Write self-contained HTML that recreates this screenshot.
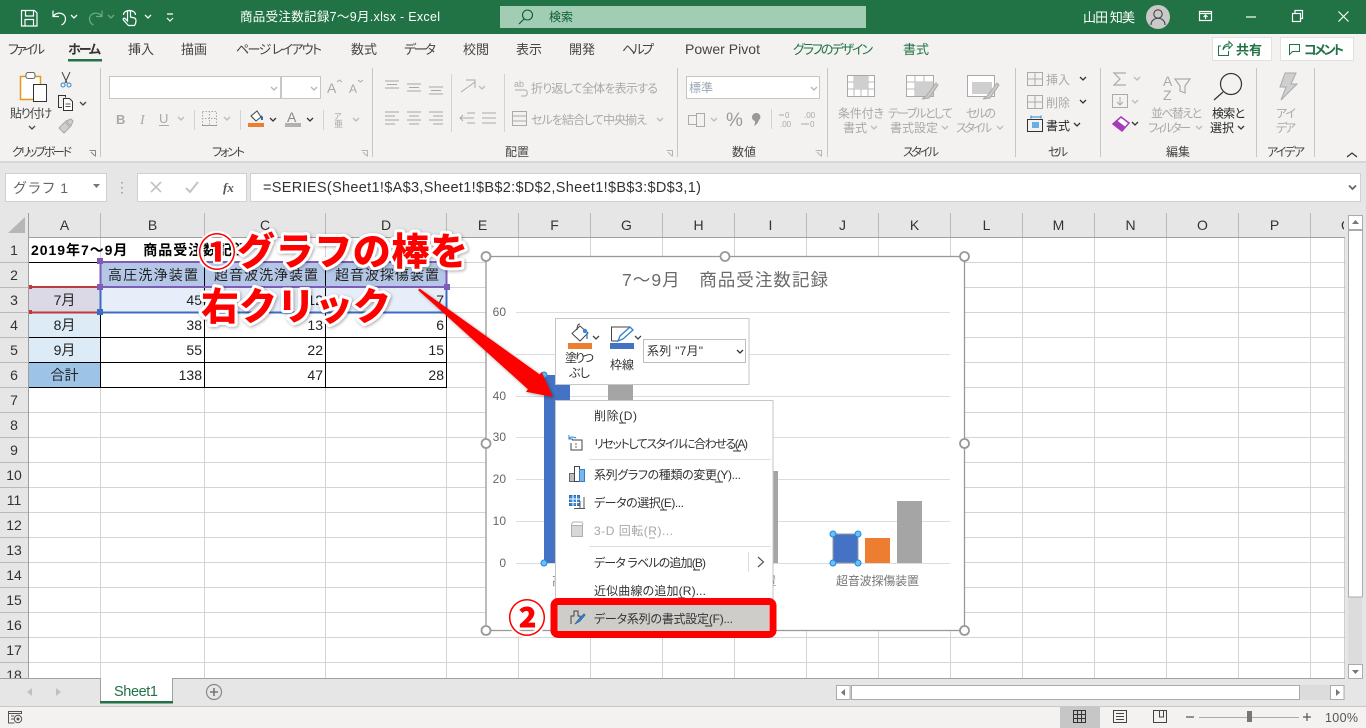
<!DOCTYPE html>
<html lang="ja"><head><meta charset="utf-8"><title>商品受注数記録7〜9月.xlsx - Excel</title>
<style>
html,body{margin:0;padding:0;background:#e6e6e6;overflow:hidden}
svg{display:block;position:absolute;left:0;top:0}
text{font-family:"Liberation Sans","Noto Sans CJK JP",sans-serif;font-size:12px;fill:#444;font-feature-settings:"palt"}
.w{fill:#fff}.d{fill:#a9a9a9}.k{fill:#262626}.g{fill:#217346}
.t{font-size:13px;fill:#444}
.c{font-size:14px;fill:#222}
.h{font-size:14px;fill:#333;text-anchor:middle}
.e{text-anchor:end}
.m{font-size:12px;fill:#333}
.ax{font-size:12px;fill:#666}
.an{font-weight:900;font-size:38px;fill:#f00;stroke:#fff;stroke-width:6px;paint-order:stroke;stroke-linejoin:round;filter:url(#sh);font-feature-settings:normal}
.cr{font-weight:900;font-size:38px;fill:#f00;stroke:#fff;stroke-width:4px;paint-order:stroke;stroke-linejoin:round;font-feature-settings:normal}
</style></head><body>
<svg width="1366" height="728" viewBox="0 0 1366 728" xmlns="http://www.w3.org/2000/svg">
<defs>
<filter id="sh" x="-10%" y="-30%" width="120%" height="160%"><feDropShadow dx="1" dy="1" stdDeviation="1.600" flood-color="#000" flood-opacity=".35"/></filter>
<path id="cv" d="M0 0l3 3 3-3" fill="none" stroke-width="1.300"/>
</defs>

<!-- base -->
<rect width="1366" height="728" fill="#e6e6e6"/>

<!-- title bar -->
<rect width="1366" height="34" fill="#217346"/>
<g fill="none" stroke="#fff" stroke-width="1.200">
<path d="M21.500 10.500h13l2.500 2.500v13h-15.500z"/><path d="M25.500 10.500v5.500h8v-5.500M25 26v-6.500h8.500v6.500"/>
<path d="M53 10.500v6h6M53.500 16c4-5 12-3 12 3 0 3-2 5-4 6"/>
<path d="M123.500 15c0-6 12-6 12 0M127 24l-3.500-4c-1-2 1-2.500 2-1l2 2v-9c0-2 3-2 3 0v5l4 1c1.500.5 1.500 2 1.500 3 0 2-.5 3-1.500 4.500h-6z"/>
</g>
<g fill="none" stroke="#6fa98a" stroke-width="1.200"><path d="M102 10.500v6h-6M101.500 16c-4-5-12-3-12 3 0 3 2 5 4 6"/></g>
<use href="#cv" x="71" y="15" stroke="#fff"/><use href="#cv" x="108" y="15" stroke="#6fa98a"/><use href="#cv" x="145" y="15" stroke="#fff"/>
<path d="M167 14h6M167 18l3 3 3-3" fill="none" stroke="#fff" stroke-width="1.200"/>
<text class="w" x="240" y="21" textLength="200" style="font-size:12.500px">商品受注数記録7〜9月.xlsx  -  Excel</text>
<rect x="500" y="6" width="366" height="22" fill="#a0cdb3"/>
<circle cx="527.500" cy="15" r="5" fill="none" stroke="#0f5c34" stroke-width="1.100"/><path d="M524 19l-5 5" stroke="#0f5c34" stroke-width="1.200"/>
<text x="549" y="21" textLength="24" style="fill:#0f5c34">検索</text>
<text class="w" x="1083" y="22" textLength="52" style="font-size:13px">山田 知美</text>
<circle cx="1158" cy="17" r="12" fill="#c9c9c9"/>
<circle cx="1158" cy="14" r="4.200" fill="none" stroke="#444" stroke-width="1.100"/><path d="M1151 25c0-9 14-9 14 0" fill="none" stroke="#444" stroke-width="1.100"/>
<g fill="none" stroke="#fff" stroke-width="1.200">
<rect x="1199.500" y="11.500" width="12" height="9"/><path d="M1199 13.500h13M1205.500 19v-4M1203.500 17l2-2 2 2"/>
<path d="M1246 17h10"/>
<rect x="1292.500" y="13.500" width="8" height="8"/><path d="M1295 13v-2.500h7.500v8H1300"/>
<path d="M1338.500 11.500l10 10M1348.500 11.500l-10 10"/>
</g>

<!-- ribbon -->
<rect y="34" width="1366" height="127" fill="#f3f2f1"/>
<rect y="161" width="1366" height="2" fill="#d6d6d6"/>
<text class="t" x="8" y="54" textLength="37">ファイル</text>
<text class="t" x="68" y="54" textLength="33" style="font-weight:700;fill:#333">ホーム</text>
<rect x="68" y="59" width="34" height="2.500" fill="#217346"/>
<text class="t" x="128" y="54" textLength="26">挿入</text>
<text class="t" x="181" y="54" textLength="26">描画</text>
<text class="t" x="236" y="54" textLength="86">ページ レイアウト</text>
<text class="t" x="351" y="54" textLength="26">数式</text>
<text class="t" x="404" y="54" textLength="32">データ</text>
<text class="t" x="463" y="54" textLength="26">校閲</text>
<text class="t" x="516" y="54" textLength="26">表示</text>
<text class="t" x="569" y="54" textLength="26">開発</text>
<text class="t" x="622" y="54" textLength="32">ヘルプ</text>
<text class="t" x="685" y="54" textLength="75" style="font-size:14px">Power Pivot</text>
<text class="t" x="793" y="54" textLength="80" style="fill:#217346">グラフのデザイン</text>
<text class="t" x="903" y="54" textLength="26" style="fill:#217346">書式</text>
<rect x="1212.500" y="37.500" width="59" height="23" fill="#fff" stroke="#e1e1e1"/>
<path d="M1221 46h-2.500v9.500h10V51M1223 50c0-4 3-6 6-6v-2.500l3.500 3.500-3.500 3.500V46c-3 0-5 1-6 4z" fill="none" stroke="#217346" stroke-width="1"/>
<text x="1236" y="54.500" textLength="26" style="font-size:13px;font-weight:700;fill:#217346">共有</text>
<rect x="1280.500" y="37.500" width="73" height="23" fill="#fff" stroke="#e1e1e1"/>
<path d="M1289.500 44.500h10v7h-7l-3 3z" fill="none" stroke="#217346" stroke-width="1"/>
<text x="1304" y="54.500" textLength="40" style="font-size:13px;font-weight:700;fill:#217346">コメント</text>

<path d="M100.500 68v89M372.500 68v89M677.500 68v89M827.500 68v89M1015.500 68v89M1100.500 68v89M1256.500 68v89M1314.500 68v89" stroke="#c6c6c6"/>
<path d="M504.500 74v58M451.500 74v58" stroke="#d2d2d2"/>

<!-- clipboard -->
<rect x="20.500" y="76.500" width="20" height="23" fill="#fff" stroke="#e8961c" stroke-width="1.500"/>
<rect x="26" y="72.500" width="9" height="6" rx="2" fill="#fff" stroke="#666"/>
<rect x="33.500" y="84.500" width="13" height="17" fill="#fff" stroke="#333"/>
<text x="10" y="117.500" textLength="42">貼り付け</text>
<use href="#cv" x="29" y="126" stroke="#444"/>
<path d="M62 72l5 11M70 72l-5 11" stroke="#444" fill="none"/><circle cx="63" cy="85" r="2" fill="none" stroke="#2e8bd0"/><circle cx="69" cy="85" r="2" fill="none" stroke="#2e8bd0"/>
<path d="M62 107.500h-3.500v-12h7v2" fill="none" stroke="#333"/><path d="M63.500 98.500h6l3 3v9h-9z" fill="#fff" stroke="#333"/><path d="M65.500 104h5M65.500 106.500h5" stroke="#555"/>
<use href="#cv" x="80" y="102" stroke="#444"/>
<path d="M59 128l6-6 5 5-6 6zM66 121l5-2 2 2-2 5z" fill="#cfcfcf" stroke="#a8a8a8"/>
<text x="12" y="156" textLength="60">クリップボード</text>
<path d="M89.500 150.500h6v6M91 152l4 4" fill="none" stroke="#888"/>

<!-- font -->
<rect x="109.500" y="76.500" width="171" height="22" fill="#fff" stroke="#c6c6c6"/>
<rect x="281.500" y="76.500" width="39" height="22" fill="#fff" stroke="#c6c6c6"/>
<use href="#cv" x="271" y="87" stroke="#b5b5b5"/><use href="#cv" x="311" y="87" stroke="#b5b5b5"/>
<text class="d" x="327" y="93" style="font-size:14px">A</text><path d="M337 82l2.500-2 2.500 2" fill="none" stroke="#aaa"/>
<text class="d" x="349" y="93" style="font-size:12px">A</text><path d="M358 80l2.500 2 2.500-2" fill="none" stroke="#aaa"/>
<text class="d" x="116" y="124" style="font-weight:700;font-size:13px">B</text>
<text class="d" x="140" y="124" style="font-style:italic;font-family:'Liberation Serif',serif;font-size:14px">I</text>
<text class="d" x="159" y="123" style="font-size:13px">U</text><path d="M159 125.500h10" stroke="#aaa"/>
<use href="#cv" x="178" y="117" stroke="#bbb"/>
<path d="M194.500 110v20M240.500 110v20M323.500 110v20" stroke="#d2d2d2"/>
<rect x="202.500" y="111.500" width="14" height="14" fill="none" stroke="#aaa" stroke-dasharray="1.500 1.500"/><path d="M202 118.500h15M209.500 111v15" stroke="#aaa" stroke-dasharray="1.500 1.500"/><path d="M202 125.500h15" stroke="#999"/>
<use href="#cv" x="224" y="117" stroke="#bbb"/>
<path d="M251 116l6-5 4 6-5 4z" fill="#fff" stroke="#444"/><path d="M261 115l2 2v3h-2z" fill="#2a6cb0"/>
<rect x="248" y="123" width="16" height="4" fill="#ed7d31"/><use href="#cv" x="270" y="118" stroke="#333"/>
<text class="d" x="287" y="122" style="font-size:14px;fill:#888">A</text><rect x="285" y="123" width="16" height="4" fill="#b3b0ad"/><use href="#cv" x="307" y="118" stroke="#333"/>
<text class="d" x="334" y="119" style="font-size:8px">ア</text><text class="d" x="334" y="127" style="font-size:9px">亜</text><use href="#cv" x="353" y="118" stroke="#bbb"/>
<text x="212" y="156" textLength="33">フォント</text>
<path d="M361.500 150.500h6v6M363 152l4 4" fill="none" stroke="#b5b5b5"/>

<!-- alignment -->
<path d="M385 81h14M387 84.500h10M385 88h14M407 84h14M409 87.500h10M407 91h14M429 87h14M431 90.500h10M429 94h14M385 112h14M385 116h10M385 120h14M385 124h10M407 112h14M409 116h10M407 120h14M409 124h10M429 112h14M433 116h10M429 120h14M433 124h10" stroke="#a6a6a6" stroke-width="1" fill="none"/>
<path d="M461 92l14-10M466 80h9v8" stroke="#aaa" fill="none"/><use href="#cv" x="479" y="86" stroke="#bbb"/>
<path d="M460 118h14M463 115l-3 3 3 3M467 113h8M467 123h8M482 113h14M482 118h14M482 123h14" stroke="#aaa" fill="none"/>
<text class="d" x="514" y="87" style="font-size:9px">ab</text><path d="M515 90h10c3 0 3 6 0 6h-4" stroke="#aaa" fill="none"/>
<text class="d" x="531" y="92.500" textLength="127">折り返して全体を表示する</text>
<rect x="512.500" y="111.500" width="14" height="14" fill="none" stroke="#aaa"/><path d="M513 116h13M513 121h13" stroke="#aaa"/>
<text class="d" x="531" y="124" textLength="116">セルを結合して中央揃え</text>
<use href="#cv" x="657" y="118" stroke="#bbb"/>
<text x="505" y="156" textLength="24">配置</text>
<path d="M666.500 150.500h6v6M668 152l4 4" fill="none" stroke="#b5b5b5"/>

<!-- number -->
<rect x="686.500" y="76.500" width="133" height="22" fill="#fff" stroke="#c6c6c6"/>
<text x="689" y="92" textLength="24" style="fill:#9aa7b5">標準</text><use href="#cv" x="811" y="87" stroke="#b5b5b5"/>
<rect x="688.500" y="115.500" width="15" height="9" fill="none" stroke="#aaa"/><rect x="696.500" y="113.500" width="8" height="13" fill="#f3f2f1" stroke="#aaa"/>
<use href="#cv" x="711" y="118" stroke="#bbb"/>
<text class="d" x="726" y="126" style="font-size:19px;fill:#999">%</text>
<path d="M756 113a4 4 0 0 1 3 7c-1 3-3 5-5 6 1-2 1-3 1-5-2-.5-3-2-3-4 0-2 2-4 4-4z" fill="#999"/>
<path d="M771.500 109v20" stroke="#d2d2d2"/>
<text class="d" x="785" y="118" style="font-size:8px">0</text><text class="d" x="780" y="127" style="font-size:8px">.00</text><path d="M779 115h5" stroke="#aaa"/>
<text class="d" x="804" y="118" style="font-size:8px">.00</text><text class="d" x="810" y="127" style="font-size:8px">0</text><path d="M801 124h8" stroke="#aaa"/>
<text x="732" y="156" textLength="24">数値</text>
<path d="M815.500 150.500h6v6M817 152l4 4" fill="none" stroke="#b5b5b5"/>

<!-- styles -->
<rect x="847.500" y="75.500" width="27" height="21" fill="#fff" stroke="#a9a9a9"/><path d="M854 76v20M861 76v20M868 76v20M848 82h26M848 89h26" stroke="#bbb"/><rect x="854" y="76" width="14" height="13" fill="#cfcfcf"/>
<text class="d" x="838" y="117.500" textLength="46">条件付き</text><text class="d" x="843" y="132" textLength="24">書式</text><use href="#cv" x="871" y="126" stroke="#bbb"/>
<rect x="906.500" y="75.500" width="27" height="21" fill="#fff" stroke="#a9a9a9"/><path d="M915 76v20M924 76v20M907 82h26M907 89h26" stroke="#bbb"/><rect x="915" y="82" width="18" height="14" fill="#cfcfcf"/>
<path d="M922 99l4-3 10-13 2 2-9 13z" fill="#c9c9c9" stroke="#aaa"/>
<text class="d" x="888" y="117.500" textLength="65">テーブルとして</text><text class="d" x="890" y="132" textLength="48">書式設定</text><use href="#cv" x="942" y="126" stroke="#bbb"/>
<rect x="967.500" y="75.500" width="27" height="21" fill="#fff" stroke="#a9a9a9"/><rect x="972" y="82" width="20" height="12" fill="#cfcfcf"/>
<path d="M983 99l4-3 10-13 2 2-9 13z" fill="#c9c9c9" stroke="#aaa"/>
<text class="d" x="966" y="117.500" textLength="30">セルの</text><text class="d" x="956" y="132" textLength="36">スタイル</text><use href="#cv" x="997" y="126" stroke="#bbb"/>
<text x="903" y="156" textLength="36">スタイル</text>

<!-- cells -->
<rect x="1027.500" y="72.500" width="15" height="13" fill="none" stroke="#aaa"/><path d="M1035 73v12M1028 79h15" stroke="#aaa"/>
<text class="d" x="1046" y="84" textLength="24">挿入</text><use href="#cv" x="1080" y="77" stroke="#333"/>
<rect x="1027.500" y="95.500" width="15" height="13" fill="none" stroke="#aaa"/><path d="M1035 96v12M1028 102h15" stroke="#aaa"/>
<text class="d" x="1046" y="107" textLength="24">削除</text><use href="#cv" x="1080" y="100" stroke="#333"/>
<path d="M1031 117h10M1031 115.500v3M1041 115.500v3" stroke="#1c88d8"/>
<rect x="1027.500" y="119.500" width="15" height="12" fill="none" stroke="#333"/><rect x="1032" y="122" width="7" height="6" fill="#6aaee6"/>
<text class="k" x="1046" y="130" textLength="24">書式</text><use href="#cv" x="1074" y="123" stroke="#333"/>
<text x="1048" y="156" textLength="20">セル</text>

<!-- editing -->
<path d="M1126 73h-12l6 6-6 6h12" fill="none" stroke="#aaa" stroke-width="1.200"/><use href="#cv" x="1134" y="77" stroke="#bbb"/>
<rect x="1112.500" y="94.500" width="15" height="13" fill="none" stroke="#aaa"/><path d="M1120 97v8M1117 102l3 3 3-3" fill="none" stroke="#aaa"/><use href="#cv" x="1132" y="100" stroke="#bbb"/>
<path d="M1113 124l8-7 8 6-7 8z" fill="#fff" stroke="#a53cb5" stroke-width="1.500"/><path d="M1113 124l4-3.500 8 6-3.500 4.500z" fill="#a53cb5"/><use href="#cv" x="1132" y="122" stroke="#333"/>
<text x="1166" y="156" textLength="24">編集</text>
<text class="d" x="1163" y="86" style="font-size:14px">A</text><text class="d" x="1163" y="100" style="font-size:14px">Z</text>
<path d="M1175 79h15l-5 7v7l-5-2v-5z" fill="none" stroke="#aaa" stroke-width="1.200"/>
<text class="d" x="1151" y="117.500" textLength="51">並べ替えと</text><text class="d" x="1148" y="132" textLength="43">フィルター</text><use href="#cv" x="1196" y="126" stroke="#bbb"/>
<circle cx="1231" cy="84" r="10.500" fill="none" stroke="#333" stroke-width="1.200"/><path d="M1223 92l-9 8" stroke="#333" stroke-width="1.200"/>
<text class="k" x="1212" y="117.500" textLength="33">検索と</text><text class="k" x="1210" y="132" textLength="24">選択</text><use href="#cv" x="1238" y="126" stroke="#333"/>

<!-- idea -->
<path d="M1285 73h11l-5 11h6l-16 16 5-13h-6z" fill="#cfcfcf" stroke="#aaa"/>
<text class="d" x="1276" y="117.500" textLength="20">アイ</text><text class="d" x="1276" y="132" textLength="20">デア</text>
<text x="1267" y="156" textLength="38">アイデア</text>
<path d="M1347 157l5-4 5 4" fill="none" stroke="#333" stroke-width="1.200"/>

<!-- formula bar -->
<rect x="5.500" y="173.500" width="101" height="28" fill="#fff" stroke="#d0d0d0"/>
<text x="13" y="193" textLength="55" style="font-size:14px;fill:#666;font-feature-settings:normal">グラフ 1</text>
<path d="M93 184h7l-3.500 4z" fill="#777"/>
<path d="M122 182v1.500M122 187v1.500M122 192v1.500" stroke="#999" stroke-width="1.500"/>
<rect x="137.500" y="173.500" width="109" height="28" fill="#fff" stroke="#d0d0d0"/>
<path d="M151 182l10 10M161 182l-10 10" stroke="#c3c3c3" stroke-width="1.600"/>
<path d="M186 188l4 4 8-10" fill="none" stroke="#c3c3c3" stroke-width="2"/>
<text x="223" y="192" style="font-family:'Liberation Serif',serif;font-style:italic;font-weight:700;font-size:13px;fill:#555">fx</text>
<rect x="250.500" y="173.500" width="1110" height="28" fill="#fff" stroke="#d0d0d0"/>
<text x="263" y="192" textLength="438" style="font-size:14.500px;fill:#333">=SERIES(Sheet1!$A$3,Sheet1!$B$2:$D$2,Sheet1!$B$3:$D$3,1)</text>
<path d="M1349 185.500l3.500 3.500 3.500-3.500" fill="none" stroke="#666" stroke-width="1.800"/>

<!-- grid -->
<rect x="0" y="238" width="1345" height="440" fill="#fff"/>
<path d="M29 262.500h1316M29 287.500h1316M29 312.500h1316M29 337.500h1316M29 362.500h1316M29 387.500h1316M29 412.500h1316M29 437.500h1316M29 462.500h1316M29 487.500h1316M29 512.500h1316M29 537.500h1316M29 562.500h1316M29 587.500h1316M29 612.500h1316M29 637.500h1316M29 662.500h1316" stroke="#d4d4d4"/>
<path d="M100.500 238v440M204.500 238v440M325.500 238v440M446.500 238v440M518.500 238v440M590.500 238v440M662.500 238v440M734.500 238v440M806.500 238v440M878.500 238v440M950.500 238v440M1022.500 238v440M1094.500 238v440M1166.500 238v440M1238.500 238v440M1310.500 238v440" stroke="#d4d4d4"/>
<!-- headers -->
<rect x="0" y="213" width="1345" height="25" fill="#e6e6e6"/>
<rect x="0" y="238" width="28.500" height="440" fill="#e6e6e6"/>
<path d="M8 233l17-16v16z" fill="#b6b6b6"/>
<path d="M100.500 213v24M204.500 213v24M325.500 213v24M446.500 213v24M518.500 213v24M590.500 213v24M662.500 213v24M734.500 213v24M806.500 213v24M878.500 213v24M950.500 213v24M1022.500 213v24M1094.500 213v24M1166.500 213v24M1238.500 213v24M1310.500 213v24" stroke="#b9b9b9"/>
<path d="M0 262.500h28M0 287.500h28M0 312.500h28M0 337.500h28M0 362.500h28M0 387.500h28M0 412.500h28M0 437.500h28M0 462.500h28M0 487.500h28M0 512.500h28M0 537.500h28M0 562.500h28M0 587.500h28M0 612.500h28M0 637.500h28M0 662.500h28" stroke="#b9b9b9"/>
<path d="M28.500 213v465M28 237.500h1317M1345 237v441" stroke="#9f9f9f" fill="none"/>
<g>
<text class="h" x="64.500" y="230">A</text><text class="h" x="152.500" y="230">B</text><text class="h" x="265" y="230">C</text><text class="h" x="386" y="230">D</text><text class="h" x="482.500" y="230">E</text><text class="h" x="554.500" y="230">F</text><text class="h" x="626.500" y="230">G</text><text class="h" x="698.500" y="230">H</text><text class="h" x="770.500" y="230">I</text><text class="h" x="842.500" y="230">J</text><text class="h" x="914.500" y="230">K</text><text class="h" x="986.500" y="230">L</text><text class="h" x="1058.500" y="230">M</text><text class="h" x="1130.500" y="230">N</text><text class="h" x="1202.500" y="230">O</text><text class="h" x="1274.500" y="230">P</text>
<svg x="1300" y="213" width="44" height="24"><text class="h" x="46.500" y="17">Q</text></svg>
<text class="h" x="14" y="255">1</text><text class="h" x="14" y="280">2</text><text class="h" x="14" y="305">3</text><text class="h" x="14" y="330">4</text><text class="h" x="14" y="355">5</text><text class="h" x="14" y="380">6</text><text class="h" x="14" y="405">7</text><text class="h" x="14" y="430">8</text><text class="h" x="14" y="455">9</text><text class="h" x="14" y="480">10</text><text class="h" x="14" y="505">11</text><text class="h" x="14" y="530">12</text><text class="h" x="14" y="555">13</text><text class="h" x="14" y="580">14</text><text class="h" x="14" y="605">15</text><text class="h" x="14" y="630">16</text><text class="h" x="14" y="655">17</text>
<svg x="0" y="663" width="28" height="15"><text class="h" x="14" y="17">18</text></svg>
</g>

<!-- cells fills -->
<rect x="29" y="313" width="71" height="24" fill="#ddebf7"/><rect x="29" y="338" width="71" height="24" fill="#ddebf7"/>
<rect x="29" y="363" width="71" height="24" fill="#9dc3e6"/>
<rect x="101" y="313" width="345" height="74" fill="#fff"/>
<rect x="29" y="288" width="71" height="24" fill="#dcd9e6"/>
<rect x="101" y="263" width="345" height="24" fill="#b4c7e7"/>
<rect x="101" y="288" width="345" height="24" fill="#e8eef9"/>
<path d="M29 262.500h418M29 312.500h418M29 337.500h418M29 362.500h418M29 387.500h418M100.500 262v126M204.500 262v126M325.500 262v126M446.500 262v126" stroke="#000" fill="none"/>
<text x="31" y="255" textLength="216" style="font-size:14px;font-weight:700;fill:#000;font-feature-settings:normal">2019年7〜9月　商品受注数記録</text>
<text x="108" y="280" textLength="90" class="c">高圧洗浄装置</text>
<text x="214" y="280" textLength="104" class="c">超音波洗浄装置</text>
<text x="335" y="280" textLength="104" class="c">超音波探傷装置</text>
<text class="h" x="64.500" y="305" style="fill:#222">7月</text><text class="h" x="64.500" y="330" style="fill:#222">8月</text><text class="h" x="64.500" y="355" style="fill:#222">9月</text><text class="h" x="64.500" y="380" style="fill:#222">合計</text>
<g class="e">
<text class="c e" x="202" y="305">45</text><text class="c e" x="323" y="305">12</text><text class="c e" x="444" y="305">7</text>
<text class="c e" x="202" y="330">38</text><text class="c e" x="323" y="330">13</text><text class="c e" x="444" y="330">6</text>
<text class="c e" x="202" y="355">55</text><text class="c e" x="323" y="355">22</text><text class="c e" x="444" y="355">15</text>
<text class="c e" x="202" y="380">138</text><text class="c e" x="323" y="380">47</text><text class="c e" x="444" y="380">28</text>
</g>
<!-- selection marks -->
<path d="M30 287h70M30 312.500h70" stroke="#c0393b" stroke-width="2" fill="none"/>
<rect x="29" y="285" width="3" height="4" fill="#c0393b"/><rect x="29" y="310" width="3" height="4" fill="#c0393b"/>
<path d="M100.500 287v25M100.500 312.500h346.500M446.500 287v25" stroke="#3b6cc4" stroke-width="2" fill="none"/>
<path d="M100.500 262v25M100.500 287h346M100.500 262h346M446.500 262v25" stroke="#7f5cb6" stroke-width="2" fill="none"/>
<rect x="97" y="258" width="6" height="6" fill="#7f5cb6"/><rect x="97" y="284" width="6" height="6" fill="#7f5cb6"/><rect x="444" y="258" width="6" height="6" fill="#7f5cb6"/><rect x="444" y="284" width="6" height="6" fill="#7f5cb6"/>
<rect x="97" y="309" width="6" height="6" fill="#3b6cc4"/>

<!-- chart -->
<rect x="486" y="256.500" width="478.500" height="374" fill="#fff"/>
<rect x="486" y="256.500" width="478.500" height="374" fill="none" stroke="#999" stroke-width="1.300"/>
<text x="622" y="286" textLength="206" style="font-size:17.500px;fill:#6a6a6a;font-feature-settings:normal">7〜9月　商品受注数記録</text>
<path d="M516 312.500h434M516 354.500h434M516 396.500h434M516 437.500h434M516 479.500h434M516 521.500h434M516 563.500h434" stroke="#dcdcdc"/>
<text class="ax e" x="506" y="316">60</text><text class="ax e" x="506" y="358">50</text><text class="ax e" x="506" y="400">40</text><text class="ax e" x="506" y="441">30</text><text class="ax e" x="506" y="483">20</text><text class="ax e" x="506" y="525">10</text><text class="ax e" x="506" y="567">0</text>
<rect x="544" y="375" width="26" height="188" fill="#4472c4"/>
<rect x="608" y="334" width="25" height="229" fill="#a5a5a5"/>
<rect x="753" y="471" width="25" height="92" fill="#a5a5a5"/>
<rect x="833" y="534" width="25" height="29" fill="#4472c4" stroke="#9a9a9a"/>
<rect x="865" y="538" width="25" height="25" fill="#ed7d31"/>
<rect x="897" y="501" width="25" height="62" fill="#a5a5a5"/>
<text x="836" y="585" textLength="83" style="fill:#757575;font-size:12px">超音波探傷装置</text>
<text x="552" y="585" style="fill:#757575;font-size:12px">高</text><text x="764" y="585" style="fill:#757575;font-size:12px">置</text>
<g fill="#6cc0f7" stroke="#1b87e0" stroke-width="1"><circle cx="544" cy="375" r="3"/><circle cx="544" cy="563" r="3"/><circle cx="833" cy="534" r="3"/><circle cx="858" cy="534" r="3"/><circle cx="833" cy="563" r="3"/><circle cx="858" cy="563" r="3"/></g>
<g fill="#fff" stroke="#999" stroke-width="1.800"><circle cx="486" cy="256.500" r="4.500"/><circle cx="725" cy="256.500" r="4.500"/><circle cx="964.500" cy="256.500" r="4.500"/><circle cx="486" cy="443.500" r="4.500"/><circle cx="964.500" cy="443.500" r="4.500"/><circle cx="486" cy="630.500" r="4.500"/><circle cx="725" cy="630.500" r="4.500"/><circle cx="964.500" cy="630.500" r="4.500"/></g>

<!-- mini toolbar -->
<rect x="555.500" y="318.500" width="193.500" height="66" fill="#fff" stroke="#c6c6c6"/>
<path d="M580 326l-8 7.500 8 7.500 8-8z" fill="#fff" stroke="#444"/><path d="M577 330c0-4 1-6 3-6" fill="none" stroke="#444"/><circle cx="585" cy="331" r="2.200" fill="#3b87d4"/><path d="M587 333v6" stroke="#3b87d4" stroke-width="1.500"/>
<rect x="568" y="343" width="24" height="6" fill="#ed7d31"/>
<use href="#cv" x="593" y="336" stroke="#444"/>
<text class="m" x="565" y="362" textLength="29">塗りつ</text><text class="m" x="569" y="377" textLength="21">ぶし</text>
<path d="M611.500 341v-14h18M611.500 341h7" fill="none" stroke="#444"/><path d="M618 341l2-5 10-9 3 3-10 9z" fill="#fff" stroke="#2e7fce" stroke-width="1.300"/>
<rect x="610" y="343" width="24" height="6" fill="#4472c4"/>
<use href="#cv" x="635" y="336" stroke="#444"/>
<text class="m" x="610" y="369" textLength="24">枠線</text>
<rect x="643.500" y="339.500" width="102" height="23" fill="#fff" stroke="#bdbdbd"/>
<text class="m" x="647" y="355" textLength="56">系列 "7月"</text><use href="#cv" x="737" y="350" stroke="#333"/>

<!-- context menu -->
<rect x="555.500" y="400.500" width="217.500" height="234" fill="#fff" stroke="#c6c6c6"/>
<path d="M589 459.500h182M589 546.500h182" stroke="#dedede"/>
<text class="m" x="594" y="420" textLength="43">削除(D)</text><path d="M619 423h7" stroke="#333"/>
<path d="M572 440h10v10h-11v-7" fill="none" stroke="#444"/><path d="M569 439c2-3 5-2 7-1M569 435l0 4 4 0" fill="none" stroke="#2e7fce"/><path d="M575 444h2M575 447h2" stroke="#666"/>
<text class="m" x="594" y="448" textLength="154">リセットしてスタイルに合わせる(A)</text><path d="M733 451h8" stroke="#333"/>
<rect x="569.500" y="473.500" width="5" height="8" fill="#bdbdbd" stroke="#666"/><rect x="574.500" y="466.500" width="5" height="15" fill="#fff" stroke="#444"/><rect x="579.500" y="469.500" width="5" height="12" fill="#7cb6e8" stroke="#2e7fce"/>
<text class="m" x="594" y="479" textLength="147">系列グラフの種類の変更(Y)...</text><path d="M715 482h8" stroke="#333"/>
<rect x="569.500" y="495.500" width="10" height="10" fill="#3b87d4" stroke="#2e6fb0"/><path d="M569 499h11M569 502.500h11M573 495v11M576.500 495v11" stroke="#fff"/><path d="M574 508.500h11M580 509v-8M584 509v-12" fill="none" stroke="#555"/>
<text class="m" x="594" y="507" textLength="90">データの選択(E)...</text><path d="M660 510h7" stroke="#333"/>
<rect x="571.500" y="525.500" width="11" height="11" fill="#d8d8d8" stroke="#b0b0b0"/><path d="M571 525l2-3h9l1 3" fill="none" stroke="#b0b0b0"/>
<text class="m" x="594" y="535" textLength="79" style="fill:#a6a6a6">3-D 回転(R)...</text><path d="M649 538h6" stroke="#a6a6a6"/>
<text class="m" x="594" y="567" textLength="112">データ ラベルの追加(B)</text><path d="M693 570h7" stroke="#333"/>
<path d="M748.500 552v20" stroke="#dedede"/><path d="M758 557l5.500 5-5.500 5" fill="none" stroke="#555" stroke-width="1.200"/>
<text class="m" x="594" y="595" textLength="112">近似曲線の追加(R)...</text><path d="M678 598h7" stroke="#333"/>
<rect x="557" y="605" width="212" height="26" fill="#cfcdca"/>
<path d="M571 624v-8h3v-5h4v5h2v3" fill="none" stroke="#444"/><path d="M575 624l4-5 5-5 1 1-5 6z" fill="#3b87d4" stroke="#2e6fb0"/>
<text class="m" x="594" y="623" textLength="139">データ系列の書式設定(F)...</text><path d="M705 626h7" stroke="#333"/>
<rect x="554" y="601.500" width="219" height="33" rx="4" fill="none" stroke="#f00" stroke-width="7"/>

<!-- sheet tab strip -->
<rect y="678" width="1345" height="28" fill="#e6e6e6"/>
<rect x="1345" y="678" width="21" height="28" fill="#e6e6e6"/>
<path d="M0 678.500h1345" stroke="#a0a0a0"/>
<path d="M0 706.500h1366" stroke="#c8c8c8"/>
<path d="M32 688v8l-5-4zM56 688v8l5-4z" fill="#c0c0c0"/>
<rect x="100" y="678" width="73" height="24" fill="#fff"/><path d="M100.500 678v24M172.500 678v24" stroke="#a0a0a0"/><rect x="100" y="701" width="73" height="2.500" fill="#217346"/>
<text x="114" y="696" textLength="44" style="font-size:14.500px;fill:#217346">Sheet1</text>
<circle cx="214" cy="692" r="7.500" fill="none" stroke="#8a8a8a" stroke-width="1.200"/><path d="M214 688v8M210 692h8" stroke="#777" stroke-width="1.600"/>
<rect x="836" y="685" width="509" height="15" fill="#dcdcdc"/>
<rect x="836.500" y="685.500" width="13.500" height="14" fill="#fff" stroke="#ababab"/><path d="M845 689v7l-4-3.500z" fill="#777"/>
<rect x="851.500" y="685.500" width="448" height="14" fill="#fff" stroke="#ababab"/>
<rect x="1330.500" y="685.500" width="13.500" height="14" fill="#fff" stroke="#ababab"/><path d="M1336 689v7l4-3.500z" fill="#777"/>

<!-- vertical scroll -->
<rect x="1345" y="213" width="21" height="465" fill="#e6e6e6"/>
<rect x="1348" y="215" width="14" height="463" fill="#dcdcdc"/>
<rect x="1348.500" y="215.500" width="14" height="14" fill="#fff" stroke="#ababab"/><path d="M1352 224h7l-3.500-4z" fill="#777"/>
<rect x="1348.500" y="230.500" width="14" height="366.500" fill="#fff" stroke="#ababab"/>
<rect x="1348.500" y="664.500" width="14" height="14" fill="#fff" stroke="#ababab"/><path d="M1352 670h7l-3.500 4z" fill="#777"/>

<!-- status bar -->
<rect y="707" width="1366" height="21" fill="#f3f2f1"/>
<rect x="8.500" y="711.500" width="13" height="2" fill="none" stroke="#555"/><path d="M8.500 713v10h6M11 716h3M11 719h3" fill="none" stroke="#555"/><circle cx="18" cy="719" r="3.700" fill="none" stroke="#555"/><circle cx="18" cy="719" r="1.500" fill="#555"/>
<rect x="1060" y="707" width="40" height="21" fill="#c6c6c6"/>
<path d="M1073.500 710.500h12v12h-12zM1073 714.500h13M1073 718.500h13M1077.500 710v13M1081.500 710v13" fill="none" stroke="#333"/>
<rect x="1113.500" y="710.500" width="13" height="12" fill="none" stroke="#444"/><path d="M1116 713.500h8M1116 716.500h8M1116 719.500h8" stroke="#444"/>
<rect x="1153.500" y="710.500" width="13" height="12" fill="none" stroke="#444"/><path d="M1159.500 710v7h4v-7" fill="none" stroke="#444"/>
<path d="M1186 717h8M1303 717h8M1307 713v8" stroke="#555" stroke-width="1.200"/>
<path d="M1199 717.500h100" stroke="#aaa"/><rect x="1247" y="711" width="5" height="11" fill="#777"/>
<text x="1325" y="722" textLength="33" style="font-size:12.500px;fill:#555">100%</text>

<!-- arrow -->
<path d="M418 290l1.500-1.500L539.700 374.400 541.600 372 553 397 526 391.700 527.900 389.200z" fill="#f00" filter="url(#sh)"/>

<!-- annotations -->
<text class="cr" x="198" y="266">①</text>
<text class="an" x="237" y="265" textLength="231">グラフの棒を</text>
<text class="an" x="201" y="320" textLength="190">右クリック</text>
<text class="cr" x="508" y="632">②</text>
</svg>
</body></html>
